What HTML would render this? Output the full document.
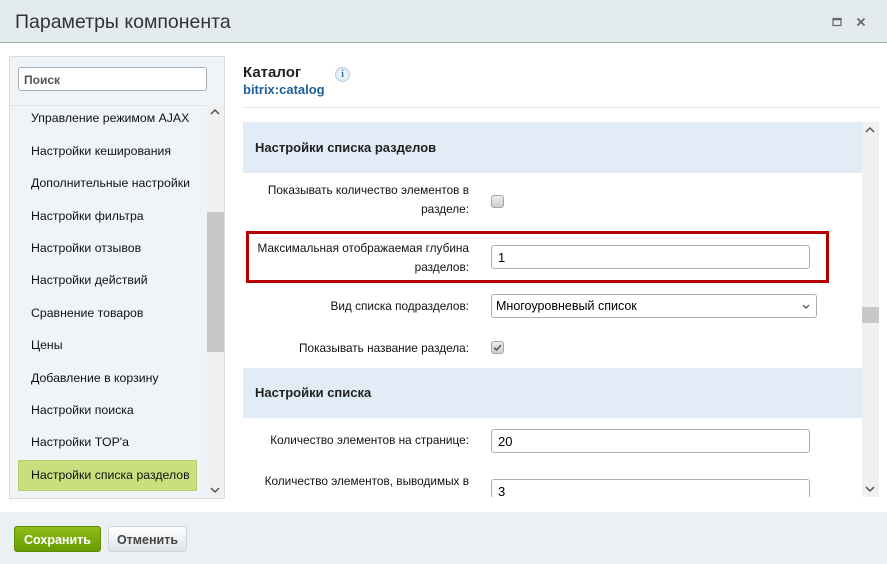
<!DOCTYPE html>
<html><head><meta charset="utf-8"><style>
*{box-sizing:border-box;margin:0;padding:0}
body{width:887px;height:564px;position:relative;overflow:hidden;background:#fff;font-family:"Liberation Sans",Arial,sans-serif;font-size:13px;color:#000}
.abs{position:absolute}
.title{left:0;top:0;width:887px;height:43px;background:#e4ebee;border-bottom:1px solid #a8aeb0}
.title span{position:absolute;left:15px;top:11px;font-size:19.5px;color:#333}
.left{left:9px;top:56px;width:216px;height:443px;background:#eef4f8;border:1px solid #d5dde2;overflow:hidden}
.search{left:18px;top:67px;width:189px;height:24px;background:#fff;border:1px solid #a9b0b5;border-radius:3px;font-size:12px;color:#555;padding:5px 5px;font-weight:bold}
.item{position:absolute;left:31px;font-size:12.3px;color:#111}
.sel{left:18px;top:460px;width:179px;height:31px;background:#c9df7f;border:1px solid #b7cf6c}
.sb{background:#f0f0f0}
.thumb{background:#c8c8c8}
.lab{position:absolute;text-align:right;font-size:11.8px;line-height:19px;color:#111;right:418px}
.inp{position:absolute;left:491px;background:#fff;border:1px solid #aab1b6;border-radius:3px;height:24px;font-size:13px;padding:4px 6px}
.hdr{position:absolute;left:243px;width:619px;background:#e1ecf7;font-weight:bold;font-size:13px;color:#222;padding-left:12px}
.cb{position:absolute;left:491px;width:13px;height:13px;border:1px solid #9aa;border-radius:3px;background:linear-gradient(#eee,#ccc)}
.foot{left:0;top:512px;width:887px;height:52px;background:#ebf0f2}
.btn{position:absolute;top:526px;height:26px;border-radius:3px;font-weight:bold;font-size:12.5px;text-align:center;line-height:26px}
</style></head><body>
<div class="abs title"><span>Параметры компонента</span>
<svg class="abs" style="left:832px;top:17px" width="10" height="10"><rect x="1" y="1.5" width="8" height="7" fill="none" stroke="#666" stroke-width="1.2"/><line x1="1" y1="2.5" x2="9" y2="2.5" stroke="#666" stroke-width="1.5"/></svg>
<svg class="abs" style="left:856px;top:17px" width="10" height="10"><path d="M1.5 1.5L8.5 8.5M8.5 1.5L1.5 8.5" stroke="#666" stroke-width="1.8"/></svg>
</div>
<div class="abs left"></div>
<div class="abs" style="left:10px;top:105px;width:197px;height:1px;background:#dbe3e8"></div>
<div class="abs search">Поиск</div>
<div class="abs sb" style="left:207px;top:105px;width:17px;height:393px"></div>
<div class="abs thumb" style="left:207px;top:212px;width:17px;height:140px"></div>
<svg class="abs" style="left:210px;top:108px" width="10" height="8"><path d="M1 6L5 2L9 6" fill="none" stroke="#555" stroke-width="1.5"/></svg>
<svg class="abs" style="left:210px;top:486px" width="10" height="8"><path d="M1 2L5 6L9 2" fill="none" stroke="#555" stroke-width="1.5"/></svg>
<div class="abs sel"></div>
<div class="item" style="top:111px">Управление режимом AJAX</div>
<div class="item" style="top:144px">Настройки кеширования</div>
<div class="item" style="top:176px">Дополнительные настройки</div>
<div class="item" style="top:209px">Настройки фильтра</div>
<div class="item" style="top:241px">Настройки отзывов</div>
<div class="item" style="top:273px">Настройки действий</div>
<div class="item" style="top:306px">Сравнение товаров</div>
<div class="item" style="top:338px">Цены</div>
<div class="item" style="top:371px">Добавление в корзину</div>
<div class="item" style="top:403px">Настройки поиска</div>
<div class="item" style="top:435px">Настройки TOP'а</div>
<div class="item" style="top:468px">Настройки списка разделов</div>

<div class="abs" style="left:243px;top:64px;font-size:15px;font-weight:bold;color:#222">Каталог</div>
<div class="abs" style="left:243px;top:82px;font-size:13px;font-weight:bold;color:#1f5f99">bitrix:catalog</div>
<div class="abs" style="left:335px;top:67px;width:15px;height:15px;border-radius:50%;background:radial-gradient(#fff,#cfe0ef);border:1px solid #b8cde0;color:#2a6ab0;font-size:10px;font-weight:bold;text-align:center;line-height:13px;font-family:'Liberation Serif',serif">i</div>
<div class="abs" style="left:243px;top:107px;width:636px;height:1px;background:#e2e6e8"></div>

<div class="hdr" style="top:122px;height:51px;line-height:51px">Настройки списка разделов</div>
<div class="abs sb" style="left:862px;top:122px;width:17px;height:375px"></div>
<div class="abs thumb" style="left:862px;top:307px;width:17px;height:16px"></div>
<svg class="abs" style="left:865px;top:126px" width="10" height="8"><path d="M1 6L5 2L9 6" fill="none" stroke="#555" stroke-width="1.5"/></svg>
<svg class="abs" style="left:865px;top:485px" width="10" height="8"><path d="M1 2L5 6L9 2" fill="none" stroke="#555" stroke-width="1.5"/></svg>

<div class="lab" style="top:181px">Показывать количество элементов в<br>разделе:</div>
<div class="cb" style="top:195px"></div>
<div class="abs" style="left:246px;top:231px;width:583px;height:52px;border:3px solid #b40000"></div>
<div class="lab" style="top:239px">Максимальная отображаемая глубина<br>разделов:</div>
<div class="inp" style="top:245px;width:319px">1</div>
<div class="lab" style="top:297px">Вид списка подразделов:</div>
<div class="inp" style="top:294px;width:326px;font-size:12.5px;padding-left:4px">Многоуровневый список<svg style="position:absolute;right:6px;top:9px" width="8" height="6"><path d="M1 1L4 4L7 1" fill="none" stroke="#444" stroke-width="1.2"/></svg></div>
<div class="lab" style="top:339px">Показывать название раздела:</div>
<div class="cb" style="top:341px"><svg width="11" height="11" style="position:absolute;left:0;top:0"><path d="M2 5.5L4.5 8L9 3" fill="none" stroke="#555" stroke-width="1.5"/></svg></div>
<div class="hdr" style="top:368px;height:50px;line-height:50px">Настройки списка</div>
<div class="lab" style="top:431px">Количество элементов на странице:</div>
<div class="inp" style="top:429px;width:319px">20</div>
<div class="lab" style="top:472px">Количество элементов, выводимых в<br>&nbsp;</div>
<div class="inp" style="top:479px;width:319px;height:18px;border-bottom:none;border-radius:3px 3px 0 0">3</div>
<div class="abs" style="left:243px;top:497px;width:636px;height:15px;background:#fff"></div>

<div class="abs foot"></div>
<div class="btn" style="left:14px;width:87px;background:linear-gradient(#8fbd1a,#679b00);color:#fff;border:1px solid #5e8c00">Сохранить</div>
<div class="btn" style="left:108px;width:79px;background:linear-gradient(#fff,#dde4e8);color:#444;border:1px solid #cfd6da">Отменить</div>
</body></html>
